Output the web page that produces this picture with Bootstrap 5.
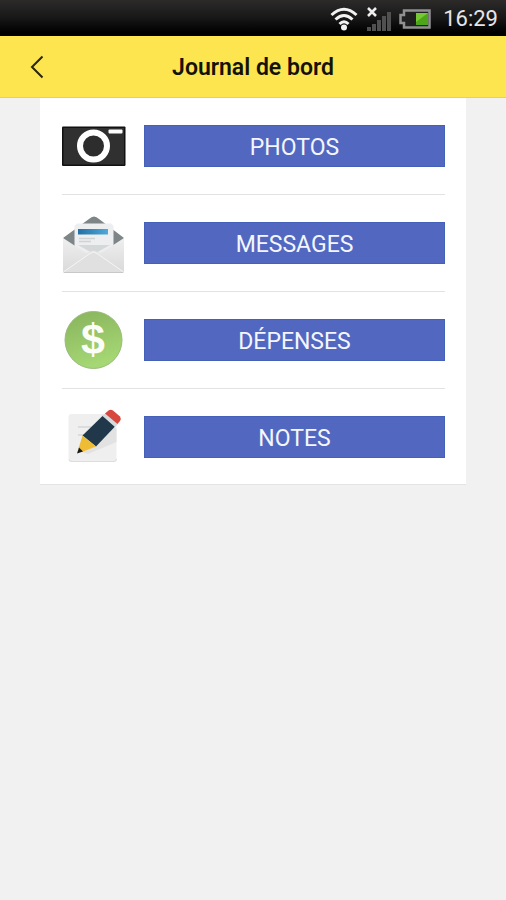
<!DOCTYPE html>
<html lang="fr">
<head>
<meta charset="utf-8">
<meta name="viewport" content="width=device-width, initial-scale=1">
<title>Journal de bord</title>
<link href="https://cdn.jsdelivr.net/npm/bootstrap@5.3.0/dist/css/bootstrap.min.css" rel="stylesheet">
<style>
body { font-family: Roboto, "Liberation Sans", sans-serif; background: #f1f1f1; }
.status-bar { height: 36px; background: linear-gradient(#2c2b2a, #181717 50%, #000 90%); color: #e6e6e6; font-size: 22px; line-height: 28px; padding: 2px 8px 0 0; }
.app-bar { height: 62px; background: #fce54f; border-bottom: 1px solid #d9cf8a; }
.app-title { font-size: 23px; line-height: 28px; font-weight: 600; color: #151204; padding-top: 2px; }
.bar-side { width: 74px; height: 60px; }
.page-body { padding: 0 40px; }
.menu-panel { background: #fff; padding: 0 21px 0 22px; border-bottom: 1px solid #e4e4e4; }
.menu-row { height: 97px; gap: 18px; border-bottom: 1px solid #e2e2e2; }
.menu-row:last-child { height: 95px; border-bottom: 0; }
.menu-button { height: 42px; font-size: 23px; line-height: 28px; color: #f4f6ff; background: #5268c0; border: 1px solid #4560b8; }
.menu-button:hover { color: #fff; background: #465bb0; }
</style>
</head>
<body>
<div class="status-bar d-flex align-items-center justify-content-end">
  <svg class="me-2" width="28" height="24" viewBox="0 0 28 24" fill="none" stroke="#f2f2f2" stroke-width="3" aria-hidden="true">
    <path d="M1.500 8Q14-3.500 26.500 8M5.500 12.500Q14 4.500 22.500 12.500M9.500 17Q14 12.500 18.500 17"/><circle cx="14" cy="20.500" r="3" fill="#f2f2f2" stroke="none"/>
  </svg>
  <svg class="me-2" width="25" height="26" viewBox="0 0 25 26" aria-hidden="true">
    <path d="M1 21h4v4H1zM6 18h4v7H6zM11 14h4v11h-4zM16 10h4v15h-4zM21 6h4v19h-4z" fill="#505050"/>
    <path d="M2 2l8 8M10 2l-8 8" stroke="#eee" stroke-width="2.500"/>
  </svg>
  <svg width="32" height="20" viewBox="0 0 32 20" aria-hidden="true">
    <path d="M5 1.500h25.500v17H5V14H1.500V6H5z" fill="#202020" stroke="#909090" stroke-width="2.500"/>
    <path d="M17 4h12v12H17z" fill="#4fa51a"/><path d="M17 4h12L17 13z" fill="#75c934"/>
  </svg>
  <time class="ms-2 ps-1">16:29</time>
</div>
<header class="app-bar d-flex align-items-center">
  <a href="#" class="bar-side d-flex align-items-center justify-content-center" aria-label="Retour">
    <svg width="14" height="24" viewBox="0 0 14 24" fill="none" stroke="#29250f" stroke-width="2" aria-hidden="true"><path d="M12.500 1.500L2 12l10.500 10.500"/></svg>
  </a>
  <h1 class="app-title flex-grow-1 text-center mb-0">Journal de bord</h1>
  <span class="bar-side"></span>
</header>
<main class="page-body">
  <nav class="menu-panel" aria-label="Journal de bord">
    <div class="menu-row d-flex align-items-center">
      <svg class="flex-shrink-0" width="64" height="64" viewBox="0 0 64 64" aria-hidden="true">
        <rect x="0" y="12.500" width="63.500" height="39.500" rx="1" fill="#111"/><rect x="1.500" y="14" width="60.500" height="36.500" fill="#303030"/>
        <circle cx="31.500" cy="32" r="13.500" fill="#2d2d2d" stroke="#fff" stroke-width="6"/>
        <rect x="46.500" y="15.500" width="14" height="4" rx="1" fill="#fff"/>
      </svg>
      <button type="button" class="btn menu-button rounded-0 flex-grow-1 p-0 pt-1">PHOTOS</button>
    </div>
    <div class="menu-row d-flex align-items-center">
      <svg class="flex-shrink-0" width="64" height="64" viewBox="0 0 64 64" aria-hidden="true">
        <defs>
          <linearGradient id="envFront" x1="0" y1="0" x2="0" y2="1"><stop offset="0" stop-color="#efefef"/><stop offset="1" stop-color="#d9d9d9"/></linearGradient>
          <linearGradient id="envBlue"><stop offset="0" stop-color="#236fa5"/><stop offset="1" stop-color="#4eaad8"/></linearGradient>
        </defs>
        <path d="M1 27L27 8Q32 3 37 8L62 27 50 44H15z" fill="#7e8586"/>
        <path d="M15 12.500H49L51.500 15V44H12.500V15z" fill="#eceeef"/>
        <path d="M16 18h30v5.500H16z" fill="url(#envBlue)"/>
        <path d="M17 27.500h16M17 30.500h12" stroke="#d0d3d4" stroke-width="1.500"/>
        <path d="M16 34H48L32 43z" fill="#d5d8d9"/>
        <path d="M1 27L24 42 30 40Q31.500 39 33 40L39 42 62 27V60Q62 62 60 62H3Q1 62 1 60z" fill="url(#envFront)"/>
        <path d="M1 61L28 42.500Q31.500 39.500 35 42.500L62 61Q62 62 60 62H3Q1 62 1 61z" fill="#e0e0e0"/>
        <path d="M2 60.500L28 42.500Q31.500 39.500 35 42.500L61 60.500" fill="none" stroke="#f5f5f5"/>
        <path d="M2 61.500H61" stroke="#c8c8c8"/>
      </svg>
      <button type="button" class="btn menu-button rounded-0 flex-grow-1 p-0 pt-1">MESSAGES</button>
    </div>
    <div class="menu-row d-flex align-items-center">
      <svg class="flex-shrink-0" width="64" height="64" viewBox="0 0 64 64" aria-hidden="true">
        <defs><linearGradient id="coinGreen" x1="0" y1="0" x2=".3" y2="1"><stop offset="0" stop-color="#88b35c"/><stop offset="1" stop-color="#a5d774"/></linearGradient></defs>
        <circle cx="31.500" cy="32" r="28.500" fill="url(#coinGreen)" stroke="#9abb7c"/>
        <text x="31" y="46" text-anchor="middle" font-family="Liberation Sans, sans-serif" font-size="43" font-weight="700" fill="#fbfdf8">$</text>
      </svg>
      <button type="button" class="btn menu-button rounded-0 flex-grow-1 p-0 pt-1">DÉPENSES</button>
    </div>
    <div class="menu-row d-flex align-items-center">
      <svg class="flex-shrink-0" width="64" height="64" viewBox="0 0 64 64" aria-hidden="true">
        <rect x="6.500" y="9" width="48" height="48" rx="3" fill="#efefef"/>
        <path d="M7 54.500Q7 56.500 10 56.500H52Q54.500 56.500 54.500 54" fill="none" stroke="#dcdcdc"/>
        <path d="M20 47L32 42 52 22 54.500 24V37L26 49z" fill="#e2e2e2"/>
        <path d="M16 22h13M16 30h6" stroke="#dcdcdc" stroke-width="2"/>
        <path d="M41 10.500L53 21.500 34 41.500 20.500 30.500z" fill="#20384a"/>
        <path d="M43.500 8L56 19 53 22 40.500 11z" fill="#d5dadd"/>
        <path d="M46.500 5.500Q48.500 4 51 5.500L58 11.500Q59.500 13.500 58 16L55.500 19 43 8.500z" fill="#d9483f"/>
        <path d="M20.500 30.500L34 41.500 20 47 16.500 43.500z" fill="#efbd35"/>
        <path d="M17 42.500L21 46.500 15 48.500z" fill="#17191a"/>
      </svg>
      <button type="button" class="btn menu-button rounded-0 flex-grow-1 p-0 pt-1">NOTES</button>
    </div>
  </nav>
</main>
<script src="https://cdn.jsdelivr.net/npm/bootstrap@5.3.0/dist/js/bootstrap.bundle.min.js"></script>
</body>
</html>
